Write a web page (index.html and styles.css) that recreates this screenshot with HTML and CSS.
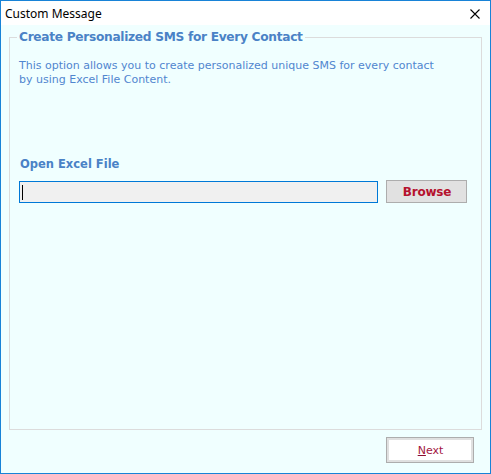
FILE: index.html
```html
<!DOCTYPE html>
<html>
<head>
<meta charset="utf-8">
<title>Custom Message</title>
<link rel="stylesheet" href="styles.css">
</head>
<body>
<div class="window">
  <div class="titlebar">
    <span class="title">Custom Message</span>
    <span class="close">
      <svg width="10" height="10" viewBox="0 0 10 10"><path d="M0.5 0.5 L9.5 9.5 M9.5 0.5 L0.5 9.5" stroke="#000" stroke-width="1.1" fill="none"/></svg>
    </span>
  </div>
  <div class="content">
    <fieldset class="group">
      <legend class="group-title">Create Personalized SMS for Every Contact</legend>
      <p class="desc">This option allows you to create personalized unique SMS for every contact<br>by using Excel File Content.</p>
      <div class="label">Open Excel File</div>
      <div class="file-row">
        <div class="file-input"><span class="caret"></span></div>
        <button class="browse">Browse</button>
      </div>
    </fieldset>
    <div class="footer">
      <button class="next"><u>N</u>ext</button>
    </div>
  </div>
</div>
</body>
</html>
```

FILE: styles.css
```css
html, body {
  margin: 0;
  padding: 0;
  background: #ffffff;
}
.window {
  box-sizing: border-box;
  width: 491px;
  height: 474px;
  border: 1px solid #1883d7;
  display: flex;
  flex-direction: column;
  background: #f0ffff;
}
.titlebar {
  height: 24px;
  background: #ffffff;
  display: flex;
  align-items: center;
  justify-content: space-between;
  padding: 0 10px 0 4px;
}
.title {
  font-family: "Noto Sans", "Open Sans", sans-serif;
  font-size: 12px;
  color: #000;
  padding-top: 1px;
}
.close {
  display: flex;
  width: 10px;
  height: 10px;
  margin-top: 2px;
}
.content {
  flex: 1;
  display: flex;
  flex-direction: column;
  padding: 4px 8px 0 8px;
}
.group {
  margin: 0;
  height: 401px;
  box-sizing: border-box;
  border: 1px solid #dcdcdc;
  padding: 0 9px;
  min-width: 0;
}
.group-title {
  font-family: "DejaVu Sans", Verdana, sans-serif;
  font-weight: bold;
  font-size: 12.2px;
  letter-spacing: -0.3px;
  line-height: 16px;
  color: #4a82c6;
  padding: 0 2px;
  margin-left: -2px;
}
.desc {
  margin: 14px 0 0 0;
  font-family: "DejaVu Sans", Verdana, sans-serif;
  font-size: 11px;
  line-height: 14px;
  color: #5086cf;
  white-space: nowrap;
}
.label {
  margin-top: 70px;
  font-family: "DejaVu Sans", Verdana, sans-serif;
  font-weight: bold;
  font-size: 11.5px;
  line-height: 15px;
  color: #4a82c6;
  padding-left: 1px;
}
.file-row {
  margin-top: 8px;
  display: flex;
  align-items: flex-start;
  gap: 8px;
}
.file-input {
  box-sizing: border-box;
  width: 359px;
  height: 22px;
  margin-top: 1px;
  border: 1px solid #0078d7;
  background: #f0f0f0;
  display: flex;
  align-items: center;
  padding-left: 2px;
}
.caret {
  width: 1px;
  height: 15px;
  background: #000;
}
.browse {
  box-sizing: border-box;
  width: 81px;
  height: 23px;
  border: 1px solid #adadad;
  background: #e1e1e1;
  font-family: "DejaVu Sans", Verdana, sans-serif;
  font-weight: bold;
  font-size: 12px;
  letter-spacing: -0.2px;
  color: #b5122e;
  padding: 0 0 0 1px;
}
.footer {
  display: flex;
  justify-content: flex-end;
  padding: 7px 8px 0 0;
}
.next {
  box-sizing: border-box;
  width: 88px;
  height: 26px;
  border: 1px solid #adadad;
  box-shadow: inset 0 0 0 2px #e0e0e0;
  background: #ffffff;
  font-family: "DejaVu Sans", Verdana, sans-serif;
  font-size: 11px;
  color: #a3163f;
  padding: 0 0 0 1px;
}
.next u {
  text-decoration-color: #8a0f30;
}
```
